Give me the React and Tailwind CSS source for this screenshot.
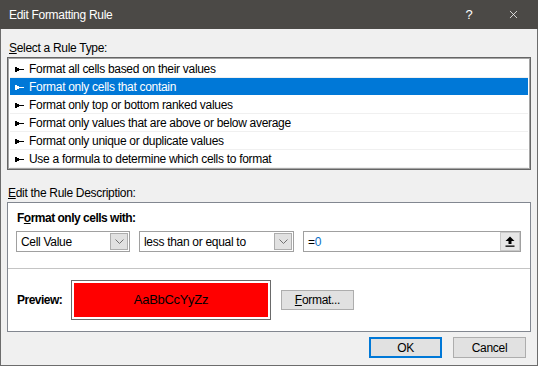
import { X } from "lucide-react";

const font = { fontFamily: '"Segoe UI", "Liberation Sans", Arial, sans-serif' };

const ruleTypes = [
  "Format all cells based on their values",
  "Format only cells that contain",
  "Format only top or bottom ranked values",
  "Format only values that are above or below average",
  "Format only unique or duplicate values",
  "Use a formula to determine which cells to format",
];

function Bullet({ color }) {
  return (
    <svg width="9" height="5" viewBox="0 0 9 5" className="shrink-0">
      <rect x="0" y="0" width="2" height="5" fill={color} />
      <rect x="2" y="1" width="2" height="3" fill={color} />
      <rect x="4" y="2" width="5" height="1" fill={color} />
    </svg>
  );
}

function Combo({ value, width }) {
  return (
    <div className={`flex h-[21px] items-center border border-[#a0a0a0] bg-white ${width}`}>
      <span className="flex-1 pl-[4px] text-[12px] text-black">{value}</span>
      <div className="mr-px flex h-[17px] w-[18px] items-center justify-center border border-[#adadad] bg-[#e1e1e1]">
        <svg width="9" height="5" viewBox="0 0 9 5">
          <path d="M0.5 0.5 L4.5 4.5 L8.5 0.5" fill="none" stroke="#707070" strokeWidth="1" />
        </svg>
      </div>
    </div>
  );
}

export default function App() {
  const selected = 1;

  return (
    <div
      className="flex h-[366px] w-[538px] flex-col overflow-hidden bg-[#f0f0f0] text-[12px] tracking-[-0.3px] text-black"
      style={font}
    >
      {/* title bar */}
      <div className="flex h-[29px] shrink-0 items-center bg-[#4b4946] text-white">
        <span className="flex-1 pl-[9px] text-[12px]">Edit Formatting Rule</span>
        <span className="w-[46px] text-center text-[13px]">?</span>
        <span className="flex w-[46px] items-center justify-center pr-[3px]">
          <X size={13} strokeWidth={1.4} />
        </span>
      </div>

      <div className="flex flex-1 flex-col border-x border-b border-[#6c6c6c] px-[6px]">
        <div className="mt-[10px] h-[18px] pl-[2px] leading-[18px]">
          <span className="underline">S</span>elect a Rule Type:
        </div>

        {/* rule list */}
        <div className="flex h-[113px] flex-col border border-[#656565] bg-white p-px pt-[2px] shadow-[inset_0_0_0_1px_#a5a5a5]">
          {ruleTypes.map((t, i) => (
            <div
              key={t}
              className={`mx-px flex h-[18px] items-center gap-[5px] border-b pl-[5px] pt-[2px] ${
                i === selected ? "border-white bg-[#0078d7] text-white" : "border-[#f0f0f0]"
              }`}
            >
              <Bullet color={i === selected ? "#ffffff" : "#000000"} />
              <span className="leading-[15px]">{t}</span>
            </div>
          ))}
        </div>

        <div className="mt-[15px] h-[16px] pl-[1px] leading-[16px]">
          <span className="underline">E</span>dit the Rule Description:
        </div>

        {/* rule description */}
        <div className="mt-px flex h-[130px] flex-col border border-[#828790] bg-white">
          <div className="flex flex-col px-[8px] pt-[8px]">
            <div className="h-[15px] pl-px font-bold leading-[15px] tracking-[-0.5px]">
              F<span className="underline">o</span>rmat only cells with:
            </div>
            <div className="mt-[5px] flex items-center">
              <Combo value="Cell Value" width="w-[114px]" />
              <div className="ml-[9px]">
                <Combo value="less than or equal to" width="w-[155px]" />
              </div>
              <div className="ml-[9px] flex h-[21px] w-[218px] items-center border border-[#a0a0a0] bg-white">
                <span className="flex-1 pl-[4px]">
                  =<span className="text-[#0b6fc6]">0</span>
                </span>
                <div className="flex h-[19px] w-[20px] items-center justify-center border border-[#c8c8c8] bg-[#e6e6e6]">
                  <svg width="10" height="11" viewBox="0 0 10 11">
                    <path d="M5 0.5 L9.5 5 L6.5 5 L6.5 8 L3.5 8 L3.5 5 L0.5 5 Z" fill="#000" />
                    <rect x="0.5" y="9.5" width="9" height="1.3" fill="#000" />
                  </svg>
                </div>
              </div>
            </div>
          </div>

          <div className="mt-[16px] h-px bg-[#c4c4c4]" />

          <div className="flex flex-1 items-center px-[9px]">
            <span className="w-[54px] font-bold tracking-[-0.5px]">Preview:</span>
            <div className="flex h-[40px] w-[200px] border border-[#6a6a6a] bg-white p-[2px]">
              <div
                className="flex flex-1 items-center justify-center bg-[#ff0000] text-[13px] tracking-[-0.3px] text-black"
                style={{ fontFamily: '"Liberation Sans", Arial, sans-serif' }}
              >
                AaBbCcYyZz
              </div>
            </div>
            <button className="ml-[10px] h-[20px] w-[73px] border border-[#adadad] bg-[#e1e1e1] text-[12px]">
              <span className="underline">F</span>ormat...
            </button>
          </div>
        </div>

        {/* footer buttons */}
        <div className="mt-[5px] flex justify-end gap-[11px] pr-[5px]">
          <button className="h-[21px] w-[73px] border-2 border-[#0078d7] bg-[#e1e1e1] text-[12px]">OK</button>
          <button className="h-[21px] w-[73px] border border-[#adadad] bg-[#e1e1e1] text-[12px]">Cancel</button>
        </div>
      </div>
    </div>
  );
}
